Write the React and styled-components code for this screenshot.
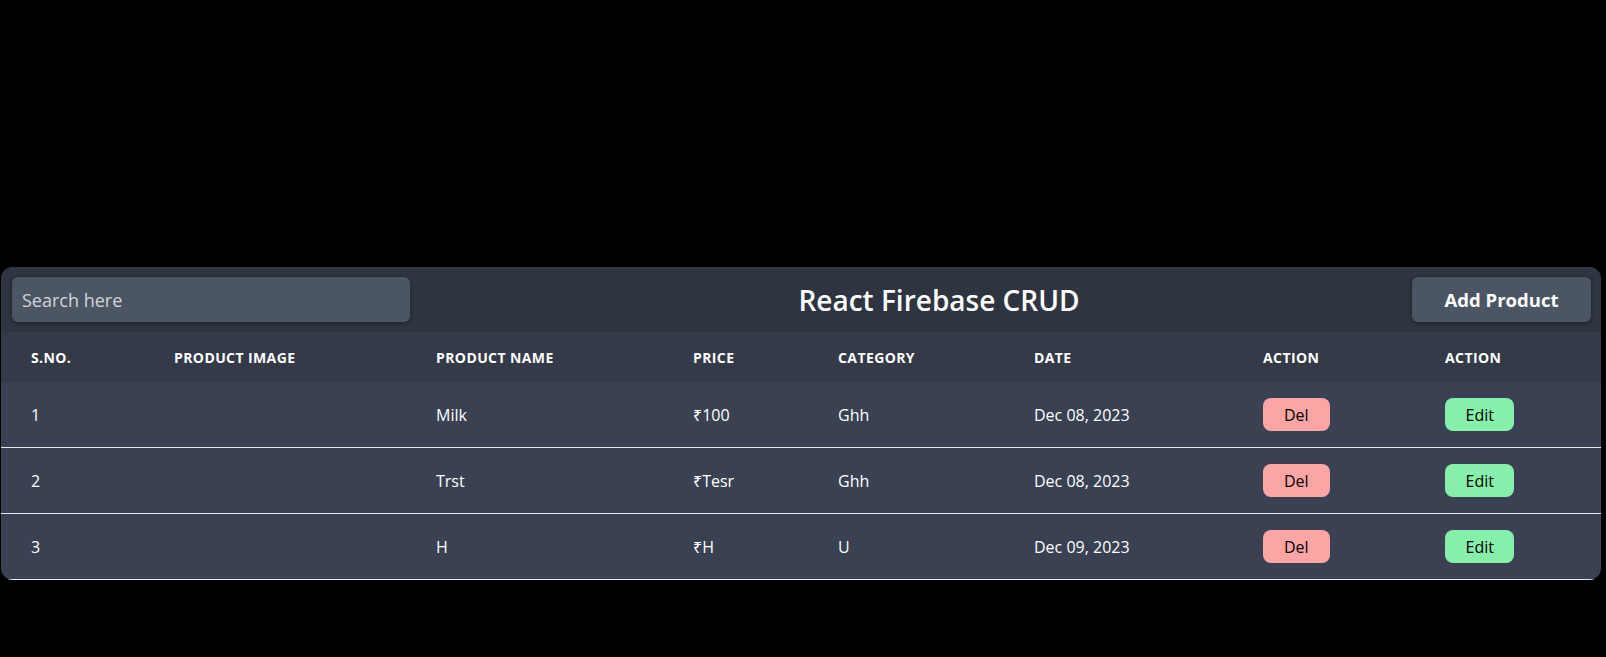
import React from 'react'
import styled, { createGlobalStyle } from 'styled-components'

const GlobalStyle = createGlobalStyle`
  html, body {
    margin: 0;
    background: #000;
    font-family: 'Open Sans', 'Noto Sans', sans-serif;
  }
`

const Page = styled.div`
  padding: 267px 5px 0 1px;
  min-height: 100vh;
  box-sizing: border-box;
  background: #000;
`

const Card = styled.div`
  border-radius: 12px;
  overflow: hidden;
  background: #394152;
  color: #fff;
`

const TopBar = styled.div`
  display: flex;
  align-items: center;
  height: 65px;
  padding: 0 10px 0 11px;
  background: #2f3540;
`

const Search = styled.input`
  width: 398px;
  height: 45px;
  box-sizing: border-box;
  padding: 0 10px;
  border: none;
  border-radius: 6px;
  background: #4b5563;
  color: #fff;
  font-family: inherit;
  font-size: 18px;
  box-shadow: 0 1px 4px rgba(0, 0, 0, 0.45);
  outline: none;
  &::placeholder {
    color: #d1d5db;
  }
`

const Title = styled.h1`
  flex: 1;
  margin: 0;
  padding-left: 56px;
  text-align: center;
  font-size: 28px;
  font-weight: 600;
`

const AddButton = styled.button`
  width: 179px;
  height: 45px;
  border: none;
  border-radius: 6px;
  background: #4b5563;
  color: #fff;
  font-family: inherit;
  font-size: 18.5px;
  font-weight: 700;
  box-shadow: 0 1px 4px rgba(0, 0, 0, 0.45);
  cursor: pointer;
`

const cols = '143px 262px 257px 145px 196px 229px 182px 1fr'

const Row = styled.div`
  display: grid;
  grid-template-columns: ${cols};
  align-items: center;
  padding-left: 30px;
`

const HeadRow = styled(Row)`
  height: 50px;
  background: #343a47;
  font-size: 14px;
  font-weight: 700;
  letter-spacing: 0.4px;
  text-transform: uppercase;
`

const BodyRow = styled(Row)`
  height: 65px;
  border-bottom: 1px solid #e5e7eb;
  font-size: 16px;
`

const Cell = styled.div`
  white-space: nowrap;
`

const ActionButton = styled.button`
  height: 33px;
  padding: 0 ${p => (p.$kind === 'del' ? 21 : 20.5)}px;
  border: none;
  border-radius: 8px;
  background: ${p => (p.$kind === 'del' ? '#fca5a5' : '#86efac')};
  color: #000;
  font-family: inherit;
  font-size: 16px;
  cursor: pointer;
`

const headers = ['S.No.', 'Product Image', 'Product Name', 'Price', 'Category', 'Date', 'Action', 'Action']

const products = [
  { name: 'Milk', price: '100', category: 'Ghh', date: 'Dec 08, 2023' },
  { name: 'Trst', price: 'Tesr', category: 'Ghh', date: 'Dec 08, 2023' },
  { name: 'H', price: 'H', category: 'U', date: 'Dec 09, 2023' },
]

export default function App() {
  return (
    <Page>
      <GlobalStyle />
      <Card>
        <TopBar>
          <Search placeholder="Search here" />
          <Title>React Firebase CRUD</Title>
          <AddButton>Add Product</AddButton>
        </TopBar>
        <HeadRow>
          {headers.map((h, i) => (
            <Cell key={i}>{h}</Cell>
          ))}
        </HeadRow>
        {products.map((p, i) => (
          <BodyRow key={i}>
            <Cell>{i + 1}</Cell>
            <Cell />
            <Cell>{p.name}</Cell>
            <Cell>₹{p.price}</Cell>
            <Cell>{p.category}</Cell>
            <Cell>{p.date}</Cell>
            <Cell>
              <ActionButton $kind="del">Del</ActionButton>
            </Cell>
            <Cell>
              <ActionButton $kind="edit">Edit</ActionButton>
            </Cell>
          </BodyRow>
        ))}
      </Card>
    </Page>
  )
}
